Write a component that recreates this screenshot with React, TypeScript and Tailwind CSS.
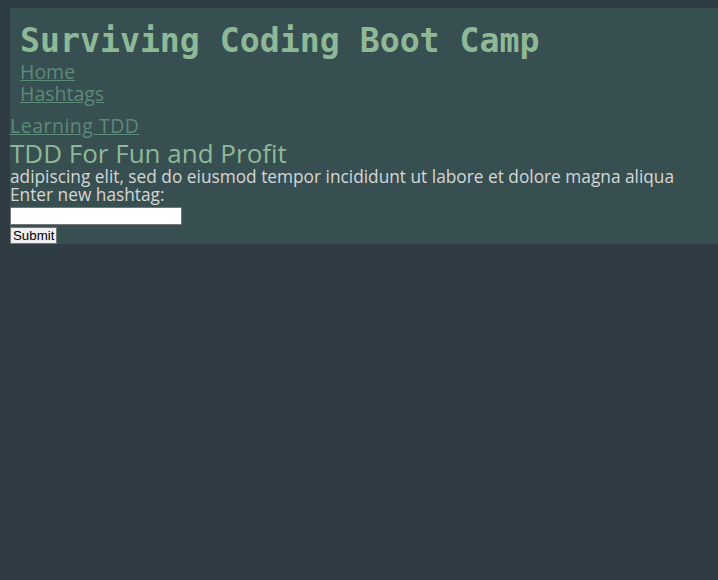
export default function App() {
  const body = '"Open Sans", "DejaVu Sans", sans-serif'
  return (
    <div className="min-h-screen bg-[#2f3c44] pl-[10px] pt-[8px]" style={{ fontFamily: body }}>
      <div className="bg-[#374f51]">
        <header className="px-[10px] pt-[13px] pb-[10px]">
          <h1 className="font-['DejaVu_Sans_Mono',monospace] text-[33.2px] font-bold leading-[40px] text-[#8fb996]">
            Surviving Coding Boot Camp
          </h1>
          <nav className="flex flex-col text-[19.5px] leading-[22px]">
            <a href="#" className="text-[#5d8a78] underline">Home</a>
            <a href="#" className="text-[#5d8a78] underline">Hashtags</a>
          </nav>
        </header>
        <main>
          <a href="#" className="block text-[19.5px] tracking-[0.5px] leading-[22px] text-[#5d8a78] underline">Learning TDD</a>
          <h2 className="mt-[2px] text-[26px] leading-[28px] text-[#8fb996]">TDD For Fun and Profit</h2>
          <p className="mt-[1px] text-[17.3px] leading-[18px] text-[#d6d6d6]">
            adipiscing elit, sed do eiusmod tempor incididunt ut labore et dolore magna aliqua
          </p>
          <form className="text-[17.3px] leading-[18px] text-[#d6d6d6]" onSubmit={(e) => e.preventDefault()}>
            <label className="block">Enter new hashtag:</label>
            <input type="text" className="mt-[3px] block h-[18px] w-[172px] border border-[#767676] bg-white" />
            <button type="submit" className="mt-[2px] block h-[17px] border border-[#767676] bg-[#efefef] px-[2px] font-['Liberation_Sans',sans-serif] text-[13.3px] leading-[15px] text-black">
              Submit
            </button>
          </form>
        </main>
      </div>
    </div>
  )
}
